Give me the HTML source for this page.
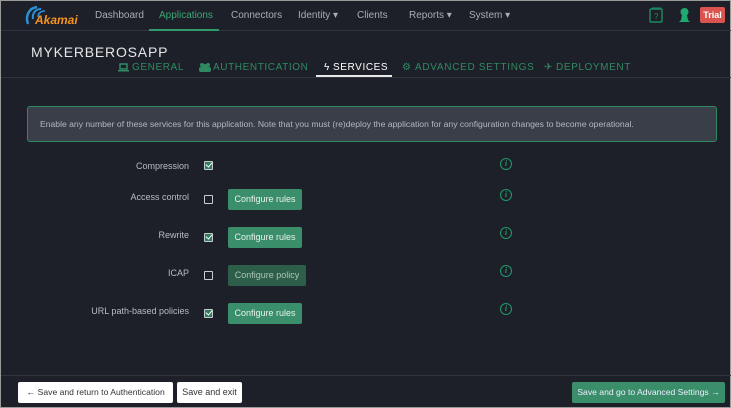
<!DOCTYPE html>
<html><head><meta charset="utf-8"><style>
*{margin:0;padding:0;box-sizing:border-box}
html{background:#1d2028}
body{width:731px;height:408px;background:#1d2028;font-family:"Liberation Sans",sans-serif;position:relative;overflow:hidden;border:1px solid #9a9a9a}
.a{position:absolute;white-space:nowrap}
.nav{color:#a9adb3;font-size:10px;top:9px}
.tab{font-size:10px;letter-spacing:0.6px;color:#2f8a62;top:61px}
.ti{top:60px;color:#2f8a62;font-size:9px}
.lbl{color:#b8bcc2;font-size:9px;text-align:right;width:110px;left:78px}
.cb{width:9px;height:9px;border:1.5px solid #c8ccd0;border-radius:1px;left:203px}
.cb.on{background:#2e7c5a;border-color:#c8ccd0}
.cb.on:after{content:"";position:absolute;left:1.5px;top:-1px;width:3px;height:5px;border:solid #fff;border-width:0 1.5px 1.5px 0;transform:rotate(40deg)}
.btn{background:#3a8e6a;color:#e8f3ee;font-size:9px;border-radius:2px;height:21px;line-height:21px;text-align:center;left:227px;width:74px}
.btn.dis{background:#2c5e49;color:#a9c4b8;width:78px}
.info{left:499px;width:12px;height:12px;border:1.5px solid #1f9a6c;border-radius:50%;color:#1f9a6c;font-size:8px;font-style:italic;font-family:"Liberation Serif",serif;text-align:center;line-height:9px;font-weight:bold}
.wb{background:#fff;color:#333;font-size:9px;height:21px;line-height:21px;border-radius:2px;top:381px;text-align:center}
</style></head><body>
<div class="a" style="left:0;top:29px;width:731px;height:1px;background:#30343c"></div>
<svg class="a" style="left:22px;top:3px" width="56" height="24" viewBox="0 0 56 24"><path d="M14 3 C6 4 2 12 5 20" stroke="#2a8fd6" stroke-width="2.5" fill="none"/><path d="M18 5 C12 5 9 10 10 15" stroke="#2a8fd6" stroke-width="2" fill="none"/><path d="M22 7 C17 7 15 10 15 13" stroke="#2a8fd6" stroke-width="1.6" fill="none"/><text x="12" y="20" font-family="Liberation Sans" font-style="italic" font-weight="bold" font-size="12" fill="#f7941d">Akamai</text></svg>
<div class="a nav" style="left:94px">Dashboard</div>
<div class="a nav" style="left:158px;color:#3aa874">Applications</div>
<div class="a" style="left:148px;top:28px;width:70px;height:2px;background:#2f9a6a"></div>
<div class="a nav" style="left:230px">Connectors</div>
<div class="a nav" style="left:297px">Identity ▾</div>
<div class="a nav" style="left:356px">Clients</div>
<div class="a nav" style="left:408px">Reports ▾</div>
<div class="a nav" style="left:468px">System ▾</div>
<svg class="a" style="left:648px;top:6px" width="15" height="16"><rect x="1" y="2" width="12" height="13" rx="1" fill="none" stroke="#1e8a63" stroke-width="1.4"/><path d="M3 1H12" stroke="#1e8a63"/><text x="5" y="12" font-size="8" fill="#1e8a63" font-family="Liberation Sans">?</text></svg>
<svg class="a" style="left:677px;top:6px" width="13" height="16"><circle cx="6.5" cy="5" r="4" fill="#1fa870"/><path d="M4 8h5l1 5 2 2H1l2-2z" fill="#1fa870"/></svg>
<div class="a" style="left:699px;top:6px;width:25px;height:16px;background:#d9534f;color:#fff;font-size:9px;font-weight:bold;line-height:16px;text-align:center;border-radius:2px">Trial</div>
<div class="a" style="left:30px;top:43px;color:#e4e6e8;font-size:14px;letter-spacing:0.8px">MYKERBEROSAPP</div>
<svg class="a" style="left:117px;top:62px" width="11" height="9"><rect x="2" y="1" width="7" height="5" fill="none" stroke="#2f8a62" stroke-width="1.5"/><rect x="0" y="7" width="11" height="1.5" fill="#2f8a62"/></svg>
<div class="a tab" style="left:131px">GENERAL</div>
<svg class="a" style="left:198px;top:61px" width="12" height="10"><circle cx="3" cy="3" r="2" fill="#2f8a62"/><circle cx="9" cy="3" r="2" fill="#2f8a62"/><circle cx="6" cy="4" r="2" fill="#2f8a62"/><rect x="0" y="5" width="12" height="5" rx="2" fill="#2f8a62"/></svg>
<div class="a tab" style="left:212px">AUTHENTICATION</div>
<div class="a tab" style="left:323px;color:#fff">ϟ</div>
<div class="a tab" style="left:332px;color:#fff">SERVICES</div>
<div class="a" style="left:315px;top:74px;width:76px;height:2px;background:#e8e8e8"></div>
<div class="a tab" style="left:401px">⚙</div>
<div class="a tab" style="left:414px;letter-spacing:0.7px">ADVANCED SETTINGS</div>
<div class="a tab" style="left:543px">✈</div>
<div class="a tab" style="left:555px">DEPLOYMENT</div>
<div class="a" style="left:0;top:76px;width:731px;height:1px;background:#30343c"></div>
<div class="a" style="left:26px;top:105px;width:690px;height:36px;background:#3a3e48;border:1px solid #2f8a62;border-radius:3px;color:#b4b8be;font-size:8.6px;line-height:34px;padding-left:12px">Enable any number of these services for this application. Note that you must (re)deploy the application for any configuration changes to become operational.</div>
<div class="a lbl" style="top:160px">Compression</div><div class="a cb on" style="top:160px"></div>
<div class="a lbl" style="top:191px">Access control</div><div class="a cb" style="top:194px"></div><div class="a btn" style="top:188px">Configure rules</div>
<div class="a lbl" style="top:229px">Rewrite</div><div class="a cb on" style="top:232px"></div><div class="a btn" style="top:226px">Configure rules</div>
<div class="a lbl" style="top:267px">ICAP</div><div class="a cb" style="top:270px"></div><div class="a btn dis" style="top:264px">Configure policy</div>
<div class="a lbl" style="top:305px">URL path-based policies</div><div class="a cb on" style="top:308px"></div><div class="a btn" style="top:302px">Configure rules</div>
<div class="a info" style="top:157px">i</div>
<div class="a info" style="top:188px">i</div>
<div class="a info" style="top:226px">i</div>
<div class="a info" style="top:264px">i</div>
<div class="a info" style="top:302px">i</div>
<div class="a" style="left:0;top:374px;width:731px;height:1px;background:#30343c"></div>
<div class="a wb" style="left:17px;width:155px;font-size:8.6px"><b style="font-size:9px">&#8592;</b> Save and return to Authentication</div>
<div class="a wb" style="left:176px;width:65px">Save and exit</div>
<div class="a" style="left:571px;top:381px;width:153px;height:21px;background:#3a8e6a;color:#eef;font-size:8.6px;line-height:21px;text-align:center;border-radius:2px">Save and go to Advanced Settings <b>&#8594;</b></div>
</body></html>
